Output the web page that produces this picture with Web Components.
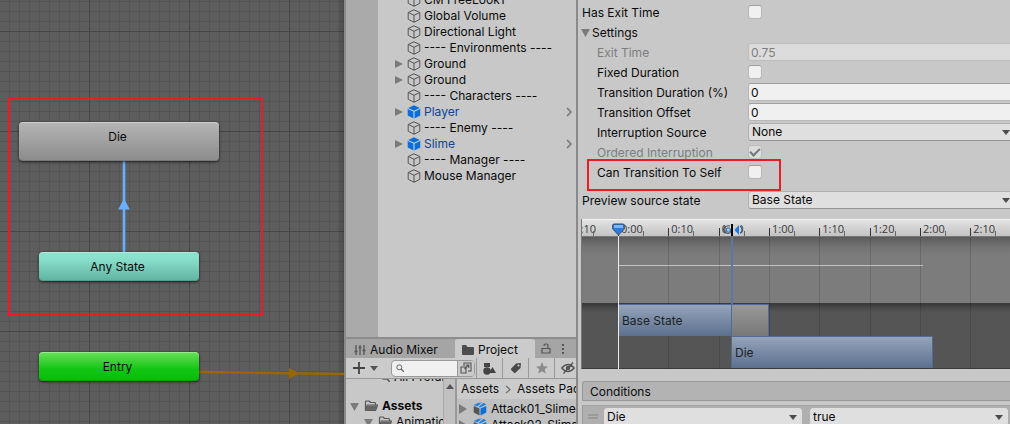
<!DOCTYPE html>
<html lang="en">
<head>
<meta charset="utf-8">
<title>Animator</title>
<style>
html,body{margin:0;height:100%}
body{font:12px/16px Inter,"Liberation Sans",sans-serif;color:#0a0a0a;background:#c8c8c8;overflow:hidden}
</style>
</head>
<body>
<editor-shell>
  <state-graph slot="graph">
    <state-node kind="state" style="left:19px;top:122px">Die</state-node>
    <state-node kind="any" style="left:39px;top:252px">Any State</state-node>
    <state-node kind="entry" style="left:39px;top:352px">Entry</state-node>
  </state-graph>
  <hierarchy-panel slot="hierarchy">
    <hierarchy-item>CM FreeLook1</hierarchy-item>
    <hierarchy-item>Global Volume</hierarchy-item>
    <hierarchy-item>Directional Light</hierarchy-item>
    <hierarchy-item>---- Environments ----</hierarchy-item>
    <hierarchy-item parent>Ground</hierarchy-item>
    <hierarchy-item parent>Ground</hierarchy-item>
    <hierarchy-item>---- Characters ----</hierarchy-item>
    <hierarchy-item parent prefab>Player</hierarchy-item>
    <hierarchy-item>---- Enemy ----</hierarchy-item>
    <hierarchy-item parent prefab>Slime</hierarchy-item>
    <hierarchy-item>---- Manager ----</hierarchy-item>
    <hierarchy-item>Mouse Manager</hierarchy-item>
  </hierarchy-panel>
  <project-panel slot="project"></project-panel>
  <inspector-panel slot="inspector">
    <field-row label="Has Exit Time" type="checkbox"></field-row>
    <field-foldout>Settings</field-foldout>
    <field-row nested label="Exit Time" type="text" value="0.75" disabled></field-row>
    <field-row nested label="Fixed Duration" type="checkbox"></field-row>
    <field-row nested label="Transition Duration (%)" type="text" value="0"></field-row>
    <field-row nested label="Transition Offset" type="text" value="0"></field-row>
    <field-row nested label="Interruption Source" type="select" value="None"></field-row>
    <field-row nested label="Ordered Interruption" type="checkbox" checked disabled></field-row>
    <field-row nested marked label="Can Transition To Self" type="checkbox"></field-row>
    <field-row class="preview" label="Preview source state" type="select" value="Base State"></field-row>
    <transition-timeline></transition-timeline>
    <conditions-list></conditions-list>
  </inspector-panel>
</editor-shell>

<script>
const define = (name, render) => customElements.define(name, class extends HTMLElement {
  constructor() {
    super();
    const template = document.createElement('template');
    template.innerHTML = '<style>*{box-sizing:border-box}</style>' + render(this);
    this.attachShadow({mode: 'open'}).append(template.content.cloneNode(true));
  }
});

define('editor-shell', () => `
<style>
:host{display:grid;height:100vh;grid-template:minmax(0,1fr)/minmax(0,344fr) minmax(0,234fr) minmax(0,432fr)}
.middle{display:grid;grid-template:minmax(0,337fr) minmax(0,87fr)/minmax(0,1fr);border:solid #8a8a8a;border-width:0 2px;min-width:0}
</style>
<slot name="graph"></slot>
<div class="middle"><slot name="hierarchy"></slot><slot name="project"></slot></div>
<slot name="inspector"></slot>`);

define('state-graph', () => `
<style>
:host{display:block;position:relative;overflow:hidden;
background:
linear-gradient(90deg,#0000 calc(100% - 6px),#0003) 0 0/100% 100%,
linear-gradient(90deg,#464646 1px,#0000 1px) 89px 0/100px 100%,
linear-gradient(#464646 1px,#0000 1px) 0 31px/100% 100px,
linear-gradient(90deg,#545454 1px,#0000 1px) 9px 0/10px 100%,
linear-gradient(#545454 1px,#0000 1px) 0 1px/100% 10px,
#5d5d5d}
svg{position:absolute;left:0;top:0}
.mark{position:absolute;left:8px;top:98px;width:255px;height:218px;border:2px solid #ed1c24}
</style>
<svg width="344" height="424" aria-hidden="true">
<path d="M124 160V253" stroke="#6aaeff" stroke-width="2.6"/>
<path d="M124 198.500L129.800 209.500H118.200Z" fill="#6aaeff"/>
<path d="M199 372L344 374" stroke="#9b6500" stroke-width="2.4"/>
<path d="M289 368L299 373.300L289 379Z" fill="#9b6500"/>
</svg>
<slot></slot>
<div class="mark"></div>`);

define('state-node', () => `
<style>
:host{position:absolute;display:block;width:160px;height:29px;padding:7px 3px 6px 0;box-sizing:border-box;text-align:center;border-radius:4px;box-shadow:0 1px 3px #000a,inset 0 1px #fff5,inset 0 -1px #0002}
:host([kind=state]){width:200px;height:39px;background:linear-gradient(#b5b5b5,#8b8b8b)}
:host([kind=any]){background:linear-gradient(#8be2cc 20%,#5fb3a2)}
:host([kind=entry]){background:linear-gradient(#68e05a,#12c512 60%,#07bd07)}
</style><slot></slot>`);

define('hierarchy-panel', () => `
<style>
:host{display:block;overflow:hidden;background:linear-gradient(90deg,#aaa 32px,#c8c8c8 32px)}
.rows{margin-top:-8px;padding-left:48px}
</style><div class="rows"><slot></slot></div>`);

define('hierarchy-item', el => {
  const prefab = el.hasAttribute('prefab');
  return `
<style>
:host{display:flex;align-items:center;height:16px;white-space:nowrap}
:host([prefab]){color:#0d4494}
.fold{width:13px;height:8px;flex:none}
.cube{width:14px;height:14px;flex:none;margin-right:3px}
.label{flex:1}
.open{width:8px;height:10px;margin-right:3px}
</style>
<svg class="fold" viewBox="0 0 13 8">${el.hasAttribute('parent') ? '<path d="M1 0L9 4L1 8Z" fill="#7b7b7b"/>' : ''}</svg>
<svg class="cube" viewBox="0 0 14 14">${prefab
  ? '<path d="M7 .3L13.300 3.200V10.500L7 13.800L.7 10.500V3.200Z" fill="#0b6fd6"/><path d="M.7 3.400L7 6.300L13.300 3.400M7 6.300V14" fill="none" stroke="#d4e2f2" stroke-width="1"/>'
  : '<path d="M7 .8L12.800 3.500V10.300L7 13.300L1.200 10.300V3.500ZM1.200 3.500L7 6.300L12.800 3.500M7 6.300V13.300" fill="none" stroke="#555" stroke-width="1" stroke-linejoin="round"/>'}</svg>
<span class="label"><slot></slot></span>
${prefab ? '<svg class="open" viewBox="0 0 8 10"><path d="M2 1L6 5L2 9" fill="none" stroke="#777" stroke-width="1.500"/></svg>' : ''}`;
});

const folder = '<svg class="folder" width="14" height="12" viewBox="0 0 14 12"><path d="M1.500 10.500V2Q1.500 1 2.500 1H5L6.500 2.500H10.500Q11.500 2.500 11.500 3.500V5M1.500 10.500L3.500 5H13.500L11.500 10.500Z" fill="none" stroke="#555" stroke-width="1.200" stroke-linejoin="round"/><path d="M3.500 5.500H13L11 10.500H2Z" fill="#666"/></svg>';
const down = '<svg width="10" height="9" viewBox="0 0 10 9"><path d="M0 1H9L4.500 9Z" fill="#7b7b7b"/></svg>';
const asset = '<svg width="9" height="10" viewBox="0 0 9 10"><path d="M0 0L8 5L0 10Z" fill="#7b7b7b"/></svg><svg class="model" width="14" height="14" viewBox="0 0 14 14"><path d="M.7 4L6.500 6.500V13.500L.7 10.500Z" fill="#555"/><path d="M7.500 6.500L13.300 4V10.500L7.500 13.500Z" fill="#0b6fd6"/><path d="M.8 3L5 1L9 .3L4.200 4.400ZM5.500 5L10.500 .8L13.200 2.500L7 5.500Z" fill="#1b80e0"/></svg>';

define('project-panel', () => `
<style>
:host{display:flex;flex-direction:column;overflow:hidden;background:#c8c8c8;border-top:2px solid #8d8d8d;white-space:nowrap}
svg{flex:none;display:block}
button{font:inherit;color:inherit;background:none;border:0;padding:0;margin:0}
.tabs{display:flex;height:19px;flex:none;background:#a5a5a5}
.tab{display:flex;align-items:center;gap:4px;padding:2px 7px 0 8px}
.tab.mixer{width:109px}
.tab.on{width:80px;background:#cbcbcb;border-radius:3px 3px 0 0;padding-left:7px}
.tabs .lock{padding:0 10px 0 6px}
.bar{display:flex;align-items:center;height:21px;flex:none;background:#cbcbcb;border-bottom:1px solid #999}
.add{display:flex;align-items:center;gap:5px;width:45px;flex:none;padding-left:7px}
.search{display:flex;align-items:center;width:84px;flex:none;height:17px;margin-right:1px;border:1px solid #999;border-radius:4px;background:#f0f0f0;overflow:hidden;padding-left:4px}
.search input{flex:1;min-width:0;width:20px;height:14px;border:0;background:none;outline:0;font:inherit}
.search button{width:17px;height:16px;background:#cbcbcb;border-left:1px solid #999;display:grid;place-items:center}
.tool{width:26px;height:20px;flex:none;border-left:1px solid #999;display:grid;place-items:center}
.body{display:flex;flex:1;min-height:0}
.tree{width:97px;overflow:hidden}
.row{display:flex;align-items:center;height:16px}
.fav{margin-top:-10px;margin-bottom:13px;padding-left:35px;gap:4px}
.root{padding-left:4px;gap:4px;font-weight:700}
.sub{padding-left:18px;gap:4px}
.scroll{width:14px;display:flex;justify-content:center;padding-top:5px;border-left:1px solid #aaa;border-right:2px solid #999;background:#c0c0c0}
.files{flex:1;min-width:0;overflow:hidden;background:#c0c0c0}
.crumbs{display:flex;align-items:center;gap:6px;height:20px;padding-left:4px;background:#cbcbcb}
.crumbs a{color:inherit;text-decoration:none}
.files .row{padding-left:2px;gap:4px}
.files .first{margin-top:2px}
.files .model{margin:0 0 0 1px}
</style>
<div class="tabs">
<button class="tab mixer"><svg width="12" height="12" viewBox="0 0 12 12"><path d="M2 1V11M6 1V11M10 1V11M.5 7.500H3.500M4.500 3.500H7.500M8.500 6.500H11.500" stroke="#555" stroke-width="1.300" fill="none"/></svg>Audio Mixer</button>
<button class="tab on"><svg width="12" height="10" viewBox="0 0 12 10"><path d="M0 1Q0 0 1 0H4L5.500 2H11Q12 2 12 3V9Q12 10 11 10H1Q0 10 0 9Z" fill="#4d4d4d"/></svg>Project</button>
<button class="lock" aria-label="Lock"><svg width="10" height="11" viewBox="0 0 10 11"><path d="M1 5.500H9V10H1ZM3 3V3Q3 1 5 1Q7 1 7 3V5.500" fill="none" stroke="#555" stroke-width="1.200"/></svg></button>
<button aria-label="Menu"><svg width="4" height="12" viewBox="0 0 4 12"><path d="M1 1H3V3H1ZM1 5H3V7H1ZM1 9H3V11H1Z" fill="#555"/></svg></button>
</div>
<div class="bar">
<button class="add" aria-label="Create"><svg width="12" height="12" viewBox="0 0 12 12"><path d="M6 0V12M0 6H12" stroke="#444" stroke-width="1.800"/></svg><svg width="8" height="5" viewBox="0 0 8 5"><path d="M0 0H8L4 5Z" fill="#555"/></svg></button>
<div class="search"><svg width="8" height="8" viewBox="0 0 8 8"><circle cx="3.300" cy="3.300" r="2.500" fill="none" stroke="#666"/><path d="M5 5L8 8" stroke="#666" stroke-width="1.300"/></svg><input type="text" aria-label="Search assets"><button aria-label="Open in search"><svg width="12" height="12" viewBox="0 0 12 12"><path d="M4 4V1H11V9H8M1 5H6V11H1ZM4.500 7L8.500 3M5.800 3H8.800V6" fill="none" stroke="#555" stroke-width="1.100"/></svg></button></div>
<button class="tool" aria-label="Filter by type"><svg width="13" height="13" viewBox="0 0 13 13"><path d="M1 1H7V5H1ZM9.500 5L13 11H6Z" fill="#444"/><circle cx="4" cy="9" r="3.700" fill="#444"/></svg></button>
<button class="tool" aria-label="Filter by label"><svg width="12" height="12" viewBox="0 0 12 12"><path d="M1.200 6.500L6 1.500L11 1L10.500 6L5.500 10.800Q4.800 11.500 4 10.800L1.200 8Q.5 7.300 1.200 6.500Z" fill="#4a4a4a"/><circle cx="8.500" cy="3.500" r="1" fill="#cbcbcb"/></svg></button>
<button class="tool" aria-label="Favorites"><svg width="12" height="12" viewBox="0 0 12 12"><path d="M6 0L7.700 4.200L12 4.500L8.700 7.200L9.800 11.600L6 9.200L2.200 11.600L3.300 7.200L0 4.500L4.300 4.200Z" fill="#8b8b8b"/></svg></button>
<button class="tool" aria-label="Hidden packages"><svg width="14" height="12" viewBox="0 0 14 12"><path d="M.8 6Q7-1 13.200 6Q7 13 .8 6ZM12 .5L2.500 11.500" fill="none" stroke="#555" stroke-width="1.300"/><circle cx="7" cy="6" r="2.200" fill="#555"/></svg></button>
</div>
<div class="body">
<div class="tree">
<div class="row fav"><svg width="9" height="9" viewBox="0 0 9 9"><circle cx="3.500" cy="3.500" r="3" fill="none" stroke="#555"/><path d="M5.500 5.500L9 9" stroke="#555" stroke-width="1.500"/></svg>All Prefab</div>
<div class="row root">${down}${folder}Assets</div>
<div class="row sub">${down}${folder}Animation</div>
</div>
<div class="scroll"><svg width="8" height="5" viewBox="0 0 8 5"><path d="M4 0L8 5H0Z" fill="#555"/></svg></div>
<div class="files">
<nav class="crumbs"><a href="#assets">Assets</a><svg width="6" height="9" viewBox="0 0 6 9"><path d="M1 1L5 4.500L1 8" fill="none" stroke="#777" stroke-width="1.400"/></svg><a href="#pack">Assets Pack</a></nav>
<div class="row first">${asset}Attack01_Slime</div>
<div class="row">${asset}Attack02_Slime</div>
</div>
</div>`);

define('inspector-panel', () => `
<style>
:host{display:block;overflow:hidden;background:#c8c8c8;padding:3px 0 0 4px}
::slotted(.preview){margin-top:8px}
</style><slot></slot>`);

define('field-foldout', () => `
<style>:host{display:block;height:20px}
button{display:flex;align-items:center;gap:1px;height:20px;font:inherit;color:inherit;border:0;background:none;padding:0;margin-left:-2px}
</style><button aria-expanded="true"><svg width="11" height="9" viewBox="0 0 11 9"><path d="M1 0H10L5.500 8Z" fill="#7b7b7b"/></svg><slot></slot></button>`);

const controlStyles = `
.pick{position:relative;display:block;min-width:0}
.pick::after{content:"";position:absolute;right:5px;top:7px;border:solid #0000;border-width:5px 4px 0;border-top-color:#4b4b4b;pointer-events:none}
select{appearance:none;display:block;width:100%;height:18px;font:inherit;line-height:16px;color:#0a0a0a;background:#dfdfdf;border:1px solid #b0b0b0;border-bottom-color:#939393;border-radius:3px;padding:0 16px 0 3px;margin:0}`;

define('field-row', el => {
  const type = el.getAttribute('type'), value = el.getAttribute('value') || '';
  const flags = (el.hasAttribute('disabled') ? ' disabled' : '') + (el.hasAttribute('checked') ? ' checked' : '');
  const control = type === 'select'
    ? `<span class="pick"><select id="control"><option>${value}</option></select></span>`
    : `<input id="control" type="${type}" value="${value}"${flags}>`;
  return `
<style>
:host{display:grid;grid-template-columns:166px minmax(0,1fr);align-items:start;height:20px;position:relative;margin-right:-5px}
label{line-height:20px;white-space:nowrap}
:host([nested]) label{padding-left:15px}
:host([disabled]) label{color:#7d7d7d}
${controlStyles}
input{appearance:none;margin:0;font:inherit;color:inherit;background:#f0f0f0;border:1px solid #b7b7b7;border-top-color:#a0a0a0;border-radius:3px}
input[type=text]{width:100%;height:18px;padding:1px 2px}
input[type=checkbox]{width:14px;height:14px;margin-top:2px;display:grid;place-items:center}
input:disabled{background:#dcdcdc;border-color:#bdbdbd;color:#7d7d7d}
input:checked::after{content:"";width:8px;height:4px;border:solid #777;border-width:0 0 2px 2px;transform:translateY(-1px) rotate(-45deg)}
.mark{position:absolute;left:5px;top:-4px;width:194px;height:32px;border:2px solid #ed1c24;pointer-events:none}
</style>
<label for="control">${el.getAttribute('label')}</label>${control}${el.hasAttribute('marked') ? '<div class="mark"></div>' : ''}`;
});

define('transition-timeline', () => {
  const groups = [['', '', '-0:10'], ['0:00', '0:10', '0:20'], ['1:00', '1:10', '1:20'], ['2:00', '2:10', '']];
  return `
<style>
:host{display:block;position:relative;overflow:hidden;margin:8px 0 0 -1px;border-left:1px solid #777}
.ruler,.lines{display:flex;margin-left:-115px}
.ruler{height:17px;font:11px/14px "Open Sans","Noto Sans",sans-serif;color:#3a3a3a}
.top{background:linear-gradient(#f4f4f4 1px,#e2e2e2 1px,#c3c3c3);border-bottom:1px solid #777;overflow:hidden}
.group{display:grid;grid-template-columns:repeat(3,1fr);width:151px;flex:none}
.cell{display:flex;justify-content:space-between;position:relative;padding:3px 0 0 3px}
.cell::before{content:"";position:absolute;left:0;bottom:0;width:1px;height:8px;background:#333}
.cell::after{content:"";position:absolute;left:50%;bottom:0;width:1px;height:5px;background:#666}
.curve{height:66px;background:linear-gradient(#5b5b5b,#737373 10px,#7c7c7c 18px)}
.curve i{position:absolute;left:37px;top:46px;width:304px;height:1px;background:#c4c4c4}
.lanes{height:66px;background:linear-gradient(#3a3a3a,#494949 4px,#555 8px);border-top:1px solid #3a3a3a;border-bottom:1px solid #3a3a3a;padding-left:37px}
.lane{display:flex;position:relative;z-index:1;height:32px;line-height:32px;color:#1d1f23}
.clip{background:linear-gradient(#94a4ba,#5c708e);border:solid #526b96;border-width:1px 1px 0 0;padding-left:3px}
.rest{width:37px;background:linear-gradient(#999,#777);border:solid #526b96;border-width:1px 1px 0 0}
.base{width:113px}.die{width:202px;margin-left:112px;border-left-width:1px}
.lines{position:absolute;top:18px;bottom:0;left:0}
.lines .group i{border-left:1px solid #0002}
.head{position:absolute;z-index:2;left:36px;top:17px;bottom:0;width:1px;background:#eee}
.cut{position:absolute;left:149px;top:17px;height:68px;width:2px;background:#5f7799}
.knob{position:absolute;left:30px;top:4px}
.range{position:absolute;left:140px;top:5px}
</style>
<div class="top"><div class="ruler">${groups.map(g => `<div class="group">${g.map(t => `<span class="cell">${t}</span>`).join('')}</div>`).join('')}</div></div>
<div class="curve"><i></i></div>
<div class="lanes"><div class="lane"><div class="clip base">Base State</div><div class="rest"></div></div><div class="lane"><div class="clip die">Die</div></div></div>
<div class="lines">${'<div class="group"><i></i><i></i><i></i></div>'.repeat(4)}</div>
<div class="cut"></div><div class="head"></div>
<svg class="knob" width="13" height="13" viewBox="0 0 13 13"><path d="M1.500 1H11.500L12.300 2V6L6.500 12L.7 6V2Z" fill="#2c7ae0" stroke="#3b4a60"/><path d="M2 2H11V5H2Z" fill="#7db4f5"/></svg>
<svg class="range" width="22" height="12" viewBox="0 0 22 12"><path d="M3 0H19V11H3Z" fill="#d2d2d2"/><path d="M3.500 2Q-.5 5.500 3.500 9.500M8 2Q4 1 3 4Q2 9 6 9.500Q8.500 9.500 9 7M18 2Q22 5.500 18 9.500" fill="none" stroke="#4b5868" stroke-width="1.100"/><circle cx="6.300" cy="6" r="2.200" fill="#9cc6f2" stroke="#37628f"/><path d="M12.500 6L17 1V11Z" fill="#1f78e6"/><path d="M9 0H11V12H9Z" fill="#000"/></svg>`;
});

define('conditions-list', () => `
<style>
:host{display:block;margin-top:12px}
h2{margin:0;font:inherit;line-height:20px;height:20px;padding-left:7px;background:#b3b3b3;border:1px solid #999;border-width:1px 0 1px 1px;border-radius:3px 0 0 0}
.list{margin-top:4px;border-left:1px solid #999;border-top:1px solid #a5a5a5;background:#afafaf;padding:2px 2px 4px 5px}
.row{display:grid;grid-template-columns:8px minmax(0,1fr) minmax(0,1fr);gap:0 8px;align-items:center}
.row svg{display:block}
${controlStyles}
select{border-color:#dfdfdf;padding-left:2px}
</style>
<h2>Conditions</h2>
<div class="list"><div class="row"><svg width="10" height="6" viewBox="0 0 10 6"><path d="M0 1H10M0 4H10" stroke="#858585"/></svg>
<span class="pick"><select aria-label="Parameter"><option>Die</option></select></span>
<span class="pick"><select aria-label="Value"><option>true</option></select></span></div></div>`);
</script>
</body>
</html>
